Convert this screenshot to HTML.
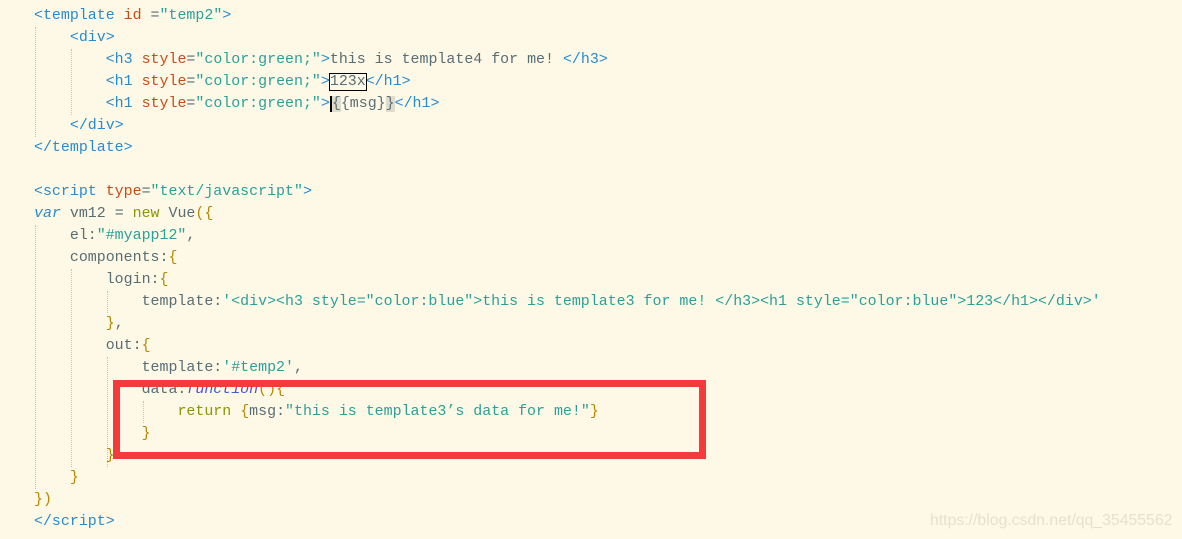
<!DOCTYPE html>
<html><head><meta charset="utf-8"><style>
body{margin:0;width:1182px;height:539px;background:#fef8e6;overflow:hidden;position:relative;font-family:"Liberation Mono",monospace;font-size:14.95px;}
.l{position:absolute;left:34px;height:22px;line-height:22px;white-space:pre;color:#586e75}
.t{color:#268bd2}.a{color:#cb4b16}.s{color:#2aa198}.b{color:#b58900}.k{color:#859900}.v{color:#268bd2;font-style:italic}.f{color:#3b5bdb;font-style:italic}
.g{position:absolute;border-left:1px dotted #c9c3b0;width:0}
.box{position:absolute;left:113px;top:380px;width:579px;height:65px;border:7px solid #f43b3b}
.wm{position:absolute;left:930px;top:512px;font-family:"Liberation Sans",sans-serif;font-size:15.8px;color:#e6e0cf}
</style></head><body>
<div class="g" style="left:35px;top:27px;height:110px"></div>
<div class="g" style="left:71px;top:49px;height:66px"></div>
<div class="g" style="left:35px;top:225px;height:264px"></div>
<div class="g" style="left:71px;top:269px;height:198px"></div>
<div class="g" style="left:107px;top:291px;height:22px"></div>
<div class="g" style="left:107px;top:357px;height:110px"></div>
<div class="g" style="left:143px;top:401px;height:22px"></div>
<div class="l" style="top:5px"><span class="t">&lt;template</span> <span class="a">id</span> =<span class="s">"temp2"</span><span class="t">&gt;</span></div>
<div class="l" style="top:27px">    <span class="t">&lt;div&gt;</span></div>
<div class="l" style="top:49px">        <span class="t">&lt;h3</span> <span class="a">style</span>=<span class="s">"color:green;"</span><span class="t">&gt;</span>this is template4 for me! <span class="t">&lt;/h3&gt;</span></div>
<div class="l" style="top:71px">        <span class="t">&lt;h1</span> <span class="a">style</span>=<span class="s">"color:green;"</span><span class="t">&gt;</span><span style="outline:1px solid #000">123x</span><span class="t">&lt;/h1&gt;</span></div>
<div class="l" style="top:93px">        <span class="t">&lt;h1</span> <span class="a">style</span>=<span class="s">"color:green;"</span><span class="t">&gt;</span><span style="background:#e0dccb;border-left:2px solid #000">{</span>{msg}<span style="background:#e0dccb">}</span><span class="t">&lt;/h1&gt;</span></div>
<div class="l" style="top:115px">    <span class="t">&lt;/div&gt;</span></div>
<div class="l" style="top:137px"><span class="t">&lt;/template&gt;</span></div>
<div class="l" style="top:181px"><span class="t">&lt;script</span> <span class="a">type</span>=<span class="s">"text/javascript"</span><span class="t">&gt;</span></div>
<div class="l" style="top:203px"><span class="v">var</span> vm12 = <span class="k">new</span> Vue<span class="b">({</span></div>
<div class="l" style="top:225px">    el:<span class="s">"#myapp12"</span>,</div>
<div class="l" style="top:247px">    components:<span class="b">{</span></div>
<div class="l" style="top:269px">        login:<span class="b">{</span></div>
<div class="l" style="top:291px">            template:<span class="s">'&lt;div&gt;&lt;h3 style="color:blue"&gt;this is template3 for me! &lt;/h3&gt;&lt;h1 style="color:blue"&gt;123&lt;/h1&gt;&lt;/div&gt;'</span></div>
<div class="l" style="top:313px">        <span class="b">}</span>,</div>
<div class="l" style="top:335px">        out:<span class="b">{</span></div>
<div class="l" style="top:357px">            template:<span class="s">'#temp2'</span>,</div>
<div class="l" style="top:379px">            data:<span class="f">function</span><span class="b">(){</span></div>
<div class="l" style="top:401px">                <span class="k">return</span> <span class="b">{</span>msg:<span class="s">"this is template3’s data for me!"</span><span class="b">}</span></div>
<div class="l" style="top:423px">            <span class="b">}</span></div>
<div class="l" style="top:445px">        <span class="b">}</span></div>
<div class="l" style="top:467px">    <span class="b">}</span></div>
<div class="l" style="top:489px"><span class="b">})</span></div>
<div class="l" style="top:511px"><span class="t">&lt;/script&gt;</span></div>
<div class="box"></div>
<div class="wm">https://blog.csdn.net/qq_35455562</div>
</body></html>
